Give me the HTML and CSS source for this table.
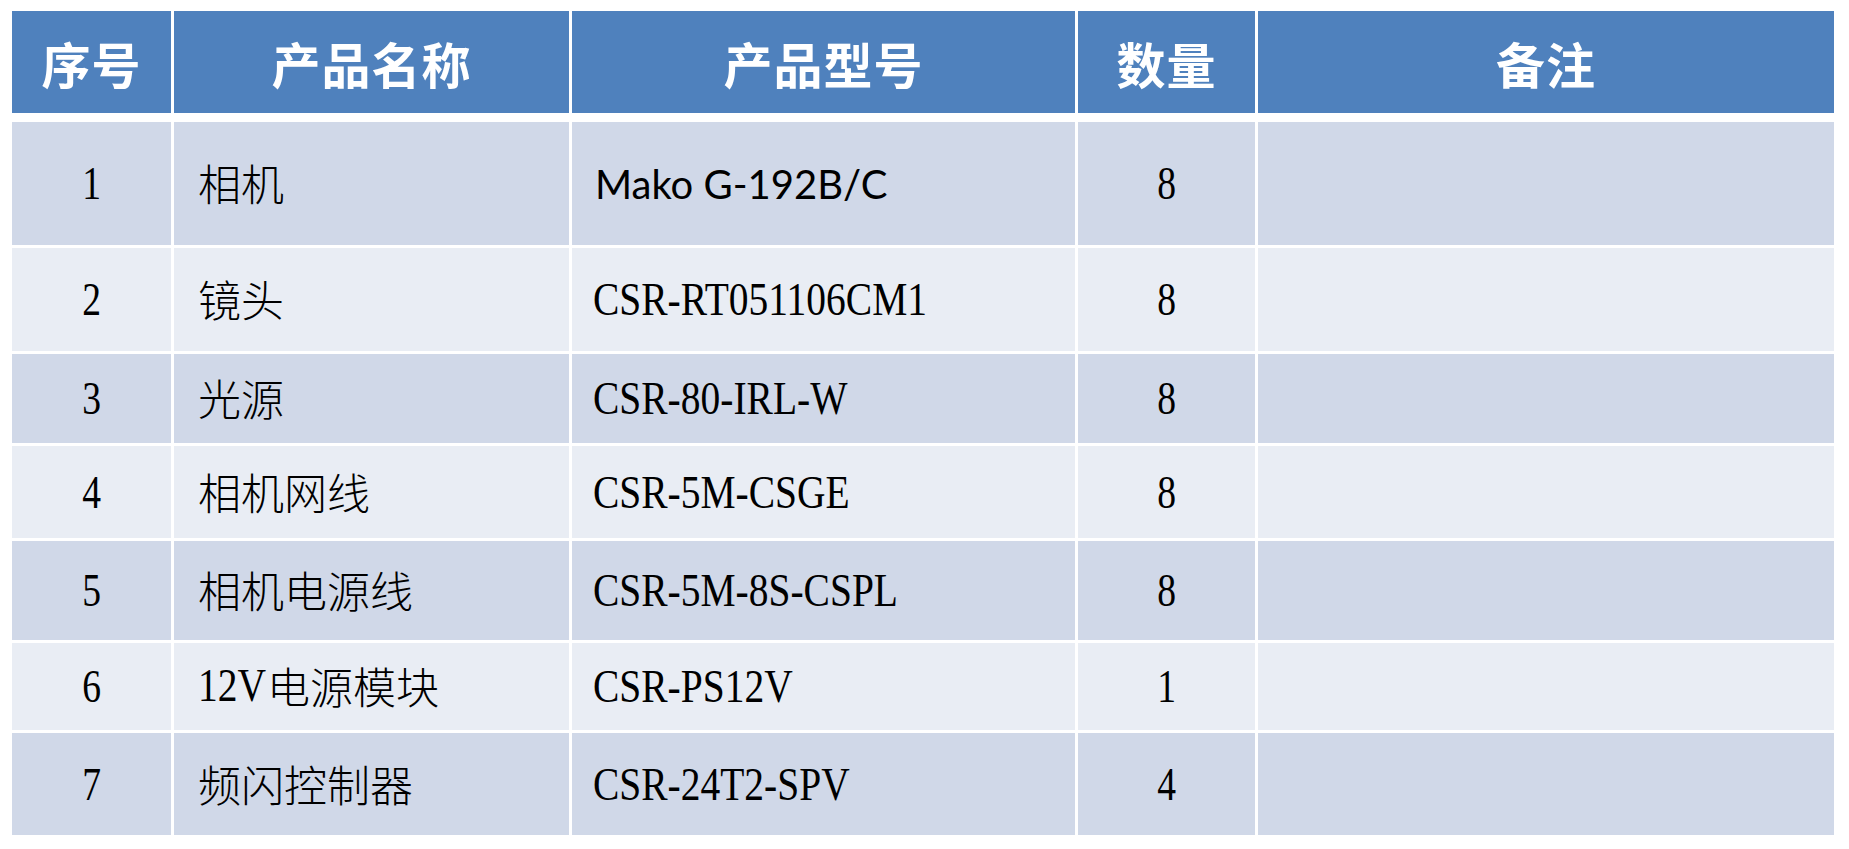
FILE: index.html
```html
<!DOCTYPE html>
<html lang="zh-CN">
<head>
<meta charset="utf-8">
<title>产品清单</title>
<link rel="stylesheet" href="styles.css">
</head>
<body>
<div class="table">
  <div class="thead">
    <div class="th">序号</div>
    <div class="th">产品名称</div>
    <div class="th">产品型号</div>
    <div class="th">数量</div>
    <div class="th">备注</div>
  </div>
  <div class="tbody">
    <div class="row odd r1">
      <div class="td num"><span class="lat c">1</span></div>
      <div class="td name">相机</div>
      <div class="td model"><span class="sans">Mako G-192B/C</span></div>
      <div class="td num"><span class="lat c">8</span></div>
      <div class="td"></div>
    </div>
    <div class="row even r2">
      <div class="td num"><span class="lat c">2</span></div>
      <div class="td name">镜头</div>
      <div class="td model"><span class="lat">CSR-RT051106CM1</span></div>
      <div class="td num"><span class="lat c">8</span></div>
      <div class="td"></div>
    </div>
    <div class="row odd r3">
      <div class="td num"><span class="lat c">3</span></div>
      <div class="td name">光源</div>
      <div class="td model"><span class="lat">CSR-80-IRL-W</span></div>
      <div class="td num"><span class="lat c">8</span></div>
      <div class="td"></div>
    </div>
    <div class="row even r4">
      <div class="td num"><span class="lat c">4</span></div>
      <div class="td name">相机网线</div>
      <div class="td model"><span class="lat">CSR-5M-CSGE</span></div>
      <div class="td num"><span class="lat c">8</span></div>
      <div class="td"></div>
    </div>
    <div class="row odd r5">
      <div class="td num"><span class="lat c">5</span></div>
      <div class="td name">相机电源线</div>
      <div class="td model"><span class="lat">CSR-5M-8S-CSPL</span></div>
      <div class="td num"><span class="lat c">8</span></div>
      <div class="td"></div>
    </div>
    <div class="row even r6">
      <div class="td num"><span class="lat c">6</span></div>
      <div class="td name"><span class="lat pre">12V</span>电源模块</div>
      <div class="td model"><span class="lat">CSR-PS12V</span></div>
      <div class="td num"><span class="lat c">1</span></div>
      <div class="td"></div>
    </div>
    <div class="row odd r7">
      <div class="td num"><span class="lat c">7</span></div>
      <div class="td name">频闪控制器</div>
      <div class="td model"><span class="lat">CSR-24T2-SPV</span></div>
      <div class="td num"><span class="lat c">4</span></div>
      <div class="td"></div>
    </div>
  </div>
</div>
</body>
</html>
```
FILE: styles.css
```css
html, body {
  margin: 0;
  padding: 0;
  background: #ffffff;
}

body {
  font-family: "Noto Sans CJK SC", "Liberation Sans", sans-serif;
  color: #000;
}

.table {
  padding: 11px 0 0 12px;
  display: flex;
  flex-direction: column;
  gap: 9px;
  width: 1822px;
}

.thead,
.row {
  display: grid;
  grid-template-columns: 159px 395px 503px 177px 576px;
  column-gap: 3px;
}

.thead {
  height: 102px;
}

.tbody {
  display: flex;
  flex-direction: column;
  gap: 3px;
}

.th {
  background: #4f81bd;
  color: #ffffff;
  font-weight: 700;
  font-size: 49px;
  display: flex;
  align-items: center;
  justify-content: center;
  letter-spacing: 1px;
}

.r1 { height: 123px; }
.r2 { height: 103px; }
.r3 { height: 89px; }
.r4 { height: 92px; }
.r5 { height: 99px; }
.r6 { height: 87px; }
.r7 { height: 102px; }

.odd .td { background: #d0d8e8; }
.even .td { background: #e9edf4; }

.td {
  display: flex;
  align-items: center;
  font-size: 43px;
  font-weight: 300;
  white-space: nowrap;
  overflow: hidden;
  padding-bottom: 3px;
  box-sizing: border-box;
}

.td.num {
  justify-content: center;
  padding-bottom: 0;
}

.td.name {
  padding-left: 24px;
}

.td.model {
  padding-left: 21px;
  padding-bottom: 0;
}

.lat {
  font-family: "Liberation Serif", "DejaVu Serif", serif;
  font-size: 47px;
  font-weight: 400;
  display: inline-block;
  transform: scaleX(0.84);
  transform-origin: left center;
  line-height: 1;
}

.lat.c {
  transform: scaleX(0.8);
  transform-origin: center center;
}

.lat.pre {
  margin-right: -12px;
}

.sans {
  font-family: Lato, "Open Sans", sans-serif;
  font-size: 40px;
  font-weight: 400;
  padding-left: 2px;
}
```
